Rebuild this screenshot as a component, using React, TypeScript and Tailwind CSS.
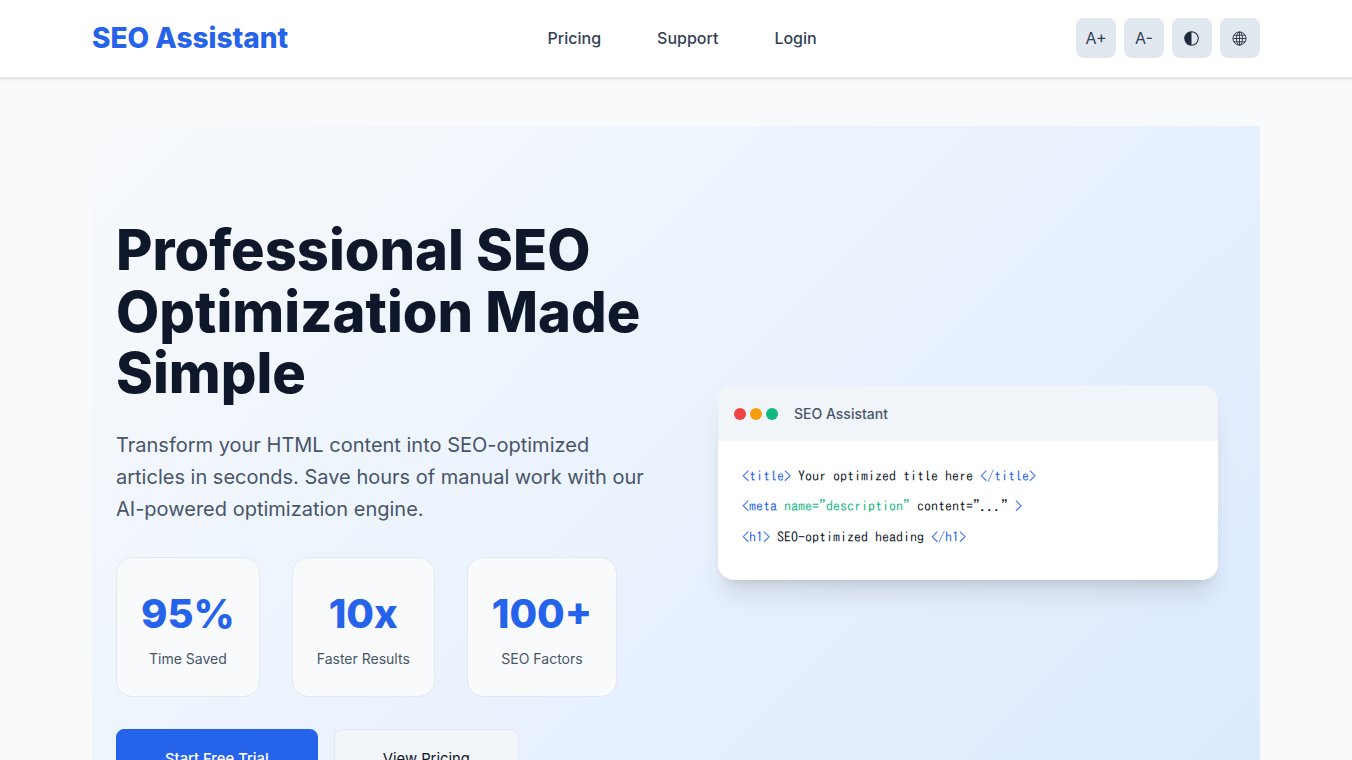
const navLinks = ["Pricing", "Support", "Login"];

const stats = [
  { value: "95%", label: "Time Saved" },
  { value: "10x", label: "Faster Results" },
  { value: "100+", label: "SEO Factors" },
];

function ToolButton({ children }: { children: React.ReactNode }) {
  return (
    <button className="flex h-10 w-10 items-center justify-center rounded-lg bg-[#e2e8f0] text-base text-[#334155]">
      {children}
    </button>
  );
}

function Tag({ children }: { children: React.ReactNode }) {
  return <span className="text-[#2563eb]">{children}</span>;
}

export default function App() {
  return (
    <div className="min-h-screen bg-[#f8fafc] font-['Inter',sans-serif]">
      <header className="border-b border-[#e2e8f0] bg-white pt-[18px] pb-[19px] shadow-sm">
        <div className="mx-auto flex max-w-[1200px] items-center justify-between px-4">
          <div className="text-[28px] leading-10 font-extrabold text-[#2563eb]">SEO Assistant</div>
          <nav className="flex gap-14">
            {navLinks.map((link) => (
              <a key={link} className="font-medium text-[#334155]">
                {link}
              </a>
            ))}
          </nav>
          <div className="flex gap-2">
            <ToolButton>A+</ToolButton>
            <ToolButton>A-</ToolButton>
            <ToolButton>
              <svg viewBox="0 0 16 16" className="h-[15px] w-[15px]">
                <circle cx="8" cy="8" r="7.2" fill="none" stroke="#1e293b" strokeWidth="1.1" />
                <path d="M8 .8a7.2 7.2 0 0 0 0 14.4z" fill="#1e293b" />
              </svg>
            </ToolButton>
            <ToolButton>
              <svg viewBox="0 0 16 16" className="h-[15px] w-[15px]" fill="none" stroke="#1e293b" strokeWidth="0.9">
                <circle cx="8" cy="8" r="7" />
                <ellipse cx="8" cy="8" rx="3.2" ry="7" />
                <path d="M8 1v14M1 8h14M2 4.5h12M2 11.5h12" />
              </svg>
            </ToolButton>
          </div>
        </div>
      </header>

      <main className="mx-auto max-w-[1200px] px-4 pt-12">
        <section className="grid grid-cols-2 items-center gap-12 bg-[linear-gradient(135deg,#f8fafc_0%,#dbeafe_100%)] px-6 pt-[94px] pb-[55px]">
          <div>
            <h1 className="mb-6 text-[56px] leading-[1.1] font-extrabold text-[#0f172a]">
              Professional SEO Optimization Made Simple
            </h1>
            <p className="mb-8 text-xl leading-8 text-[#475569]">
              Transform your HTML content into SEO-optimized articles in seconds. Save hours of manual work with our
              AI-powered optimization engine.
            </p>
            <div className="mb-8 flex gap-8">
              {stats.map((stat) => (
                <div key={stat.label} className="rounded-2xl border border-[#e2e8f0] bg-[#f8fafc] p-6 text-center">
                  <div className="text-[40px] leading-[64px] font-extrabold text-[#2563eb]">{stat.value}</div>
                  <div className="text-sm leading-[26px] text-[#475569]">{stat.label}</div>
                </div>
              ))}
            </div>
            <div className="flex gap-4">
              <button className="rounded-lg border border-[#2563eb] bg-[#2563eb] px-12 py-[18px] text-[14.8px] font-medium text-white">
                Start Free Trial
              </button>
              <button className="rounded-lg border border-[#e2e8f0] bg-[#f1f5f9] px-12 py-[18px] text-[14.8px] text-[#0f172a]">
                View Pricing
              </button>
            </div>
          </div>

          <div className="mx-auto mb-[42.5px] w-full max-w-[500px] overflow-hidden rounded-2xl bg-white shadow-xl">
            <div className="flex items-center gap-4 bg-[#f1f5f9] p-4">
              <div className="flex gap-1">
                <span className="h-3 w-3 rounded-full bg-[#ef4444]" />
                <span className="h-3 w-3 rounded-full bg-[#f59e0b]" />
                <span className="h-3 w-3 rounded-full bg-[#10b981]" />
              </div>
              <span className="mt-[0.5px] -mb-[0.5px] text-sm leading-[22.4px] font-medium text-[#475569]">SEO Assistant</span>
            </div>
            <div className="p-6 font-['IPAGothic',monospace] text-sm text-[#0f172a]">
              <div className="mb-2 leading-[22.4px]">
                <Tag>&lt;title&gt;</Tag> Your optimized title here <Tag>&lt;/title&gt;</Tag>
              </div>
              <div className="mb-2 leading-[22.4px]">
                <Tag>&lt;meta</Tag> <span className="text-[#10b981]">name="description"</span> content="..." <Tag>&gt;</Tag>
              </div>
              <div className="mb-2 leading-[22.4px]">
                <Tag>&lt;h1&gt;</Tag> SEO-optimized heading <Tag>&lt;/h1&gt;</Tag>
              </div>
            </div>
          </div>
        </section>
      </main>
    </div>
  );
}
